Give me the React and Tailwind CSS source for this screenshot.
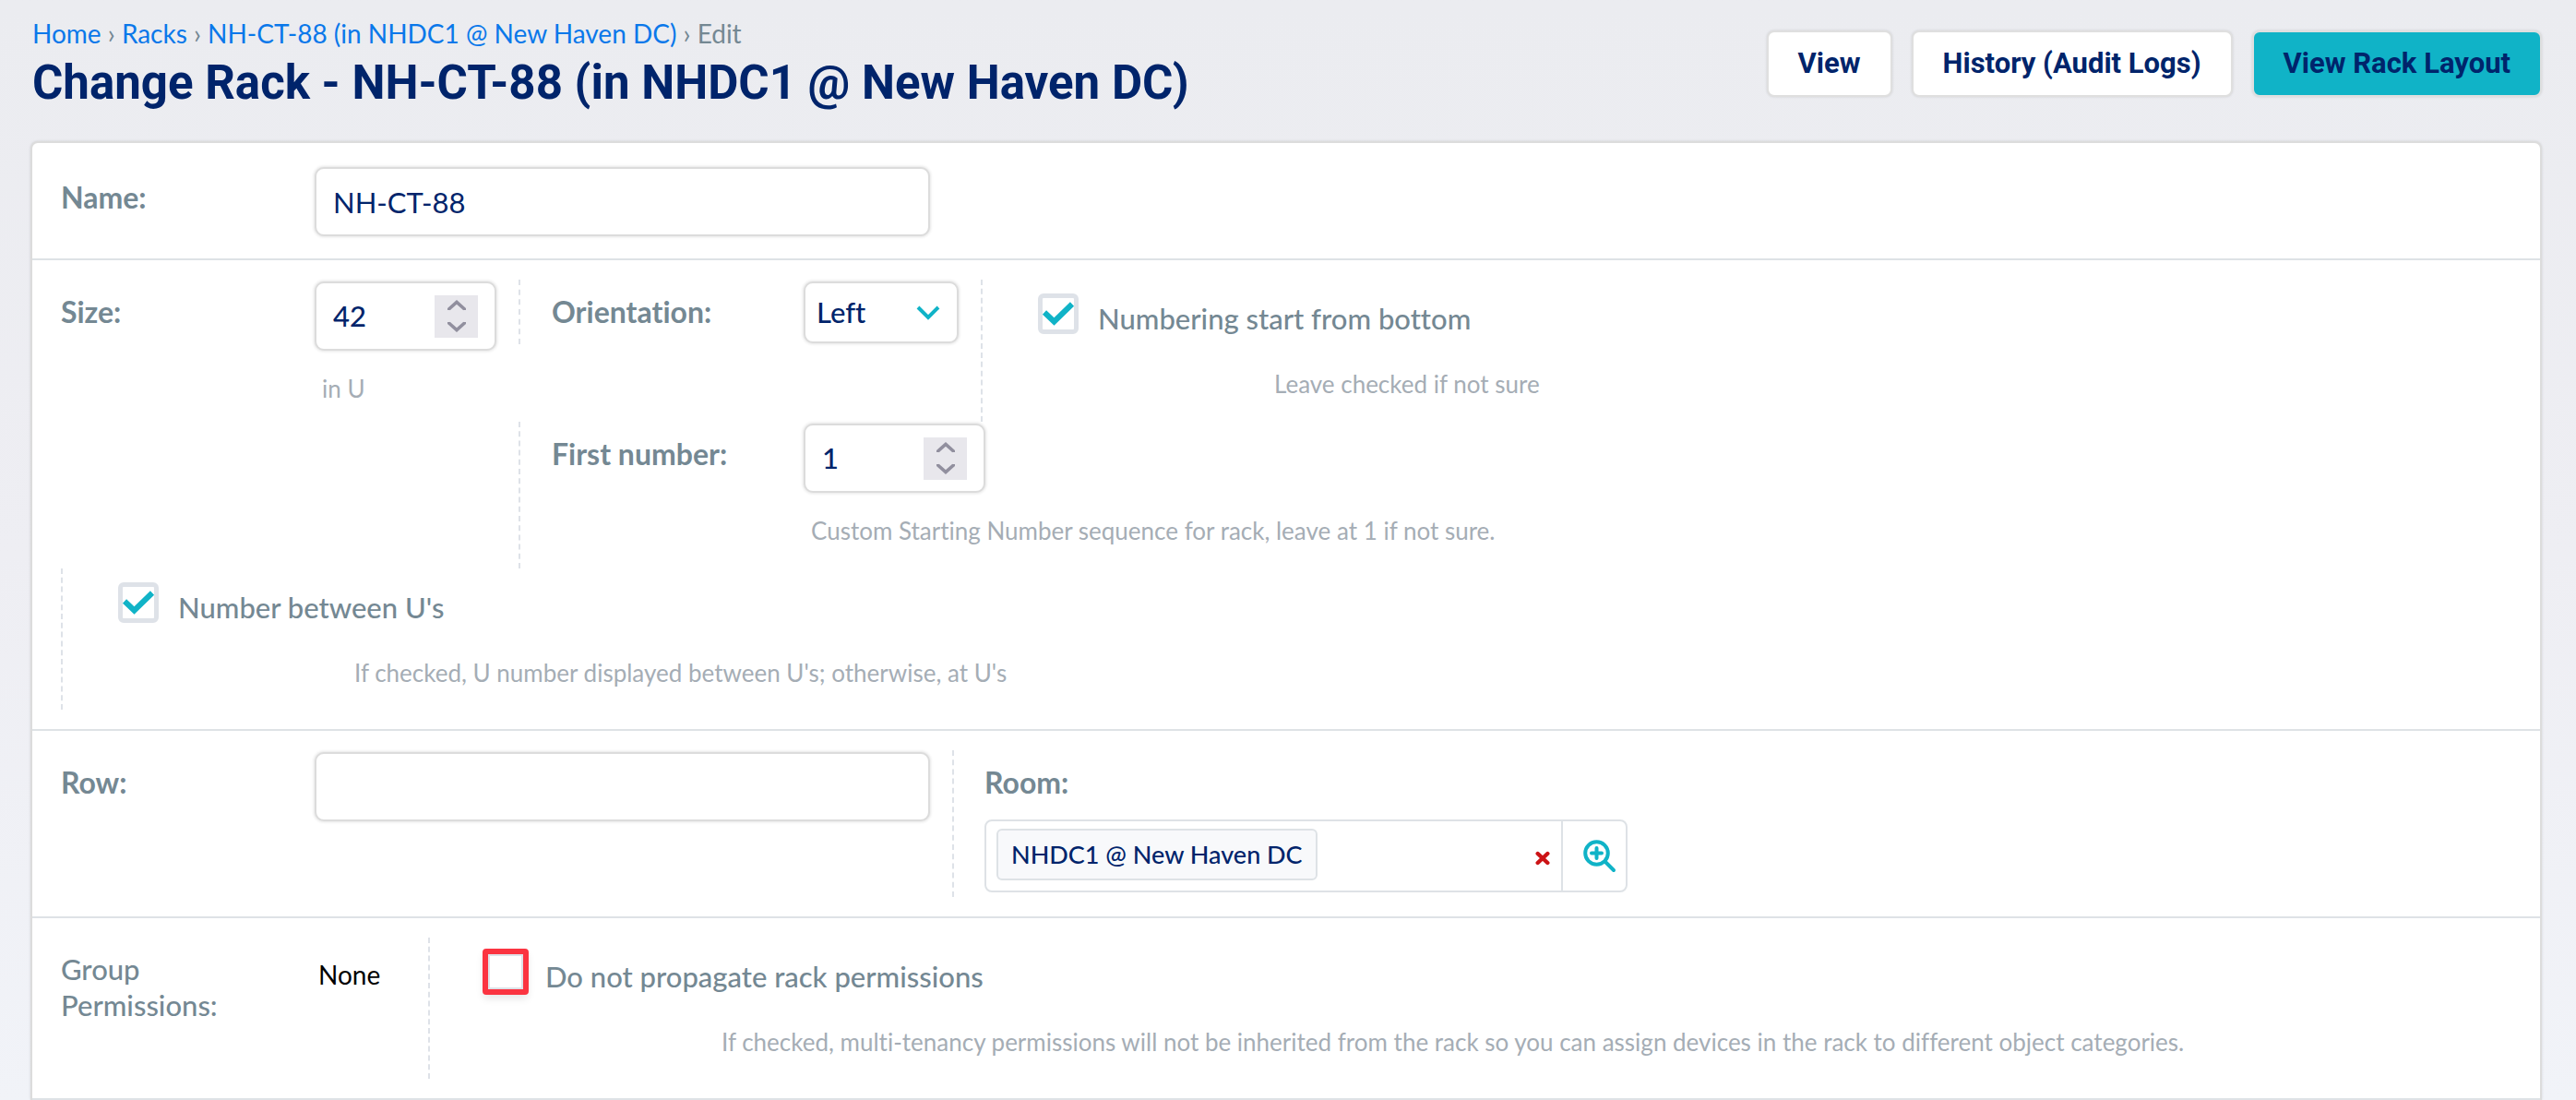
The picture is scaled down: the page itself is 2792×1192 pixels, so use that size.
import React from "react";

const fieldBox =
  "rounded-[10px] border-2 border-[#dcdcdc] bg-white shadow-[0_0_3px_1px_rgba(0,0,0,0.1)]";

function Label({ htmlFor, className = "", children }) {
  return (
    <label
      htmlFor={htmlFor}
      className={`mt-[15px] block shrink-0 text-[32px] leading-[39px] font-bold text-[#748893] ${className}`}
    >
      {children}
    </label>
  );
}

function Help({ className = "", children }) {
  return (
    <p className={`text-[26px] leading-[39px] whitespace-nowrap text-[#a5adb5] ${className}`}>
      {children}
    </p>
  );
}

function TextField({ id, defaultValue }) {
  return (
    <input
      id={id}
      type="text"
      defaultValue={defaultValue}
      className={`mt-[2px] h-[75px] w-[667px] px-[18px] text-[31px] text-[#00246b] outline-none ${fieldBox}`}
    />
  );
}

function StepButton({ label, d }) {
  return (
    <button type="button" aria-label={label} className="flex h-[23px] w-full items-center justify-center">
      <svg width="20" height="12" viewBox="0 0 20 12" fill="none" stroke="#918f9e" strokeWidth="3.6">
        <path d={d} />
      </svg>
    </button>
  );
}

function NumberField({ id, defaultValue }) {
  return (
    <div className={`mt-[2px] flex h-[75px] w-[197px] items-center pr-[18px] pl-[18px] ${fieldBox}`}>
      <input
        id={id}
        type="number"
        defaultValue={defaultValue}
        className="min-w-0 flex-1 appearance-none bg-transparent text-[31px] font-medium text-[#00246b] outline-none [-moz-appearance:textfield] [&::-webkit-inner-spin-button]:appearance-none"
      />
      <div className="w-[47px] bg-[#e8e7ec]">
        <StepButton label="Increase" d="M1.5 11V10L10 2.5L18.5 10V11" />
        <StepButton label="Decrease" d="M1.5 1V2L10 9.5L18.5 2V1" />
      </div>
    </div>
  );
}

function CheckField({ id, label, help, checked, highlighted, className = "" }) {
  return (
    <div className={`border-l-2 border-dashed border-[#dee2e8] pb-5 ${className}`}>
      <div className="flex pl-[60px]">
        <span className="mt-[15px] grid h-11 w-11 shrink-0">
          <input
            id={id}
            type="checkbox"
            defaultChecked={checked}
            className={`col-start-1 row-start-1 h-11 w-11 appearance-none border-[5px] border-[#dee2e8] bg-white peer ${
              highlighted
                ? "rounded-[1px] outline-[6px] outline-offset-[-3px] outline-[#fb3441] shadow-[0_5px_8px_2px_rgba(0,0,0,0.1)]"
                : "rounded-[6px]"
            }`}
          />
          <svg
            viewBox="0 0 44 44"
            className="pointer-events-none col-start-1 row-start-1 hidden h-11 w-11 peer-checked:block"
            fill="none"
            stroke="#10b3c7"
            strokeWidth="6"
          >
            <path d="M7 20.5L17.5 30.5L37 11.5" />
          </svg>
        </span>
        <label
          htmlFor={id}
          className="mt-[23px] ml-[21px] text-[31px] leading-[39px] font-medium whitespace-nowrap text-[#748893]"
        >
          {label}
        </label>
      </div>
      <Help className="mt-[32px] pl-[316px]">{help}</Help>
    </div>
  );
}

const dashed = "border-l-2 border-dashed border-[#dee2e8]";
const row = "border-b-2 border-[#dee2e6] px-[31px]";
const crumbLink = "text-[#0a78ea]";
const action =
  "flex h-[72px] items-center rounded-[8px] border-2 border-[#dfdfdf] px-8 font-['Roboto',sans-serif] text-[31px] font-bold whitespace-nowrap text-[#00246b] shadow-[0_0_3px_rgba(0,0,0,0.12)]";

export default function App() {
  return (
    <div className="flex min-h-screen flex-col bg-linear-to-b from-[#ebecf0] via-[#eeeef3] to-[#f1f3f8] font-['Lato','Open_Sans',sans-serif] [font-variant-ligatures:none]">
      <header className="flex items-start justify-between pr-[37px] pl-[35px]">
        <div>
          <nav aria-label="Breadcrumb" className="mt-[17px] text-[28px] leading-[39px] text-[#748893]">
            <a href="#home" className={crumbLink}>Home</a> ›{" "}
            <a href="#racks" className={crumbLink}>Racks</a> ›{" "}
            <a href="#rack" className={crumbLink}>NH-CT-88 (in NHDC1 @ New Haven DC)</a> › Edit
          </nav>
          <h1 className="font-['Roboto',sans-serif] text-[51px] leading-[68px] font-bold text-[#00246b]">
            Change Rack - NH-CT-88 (in NHDC1 @ New Haven DC)
          </h1>
        </div>
        <div className="mt-[33px] flex gap-[21px]">
          <a href="#view" className={`bg-white ${action}`}>View</a>
          <a href="#history" className={`bg-white ${action}`}>History (Audit Logs)</a>
          <a href="#layout" className={`bg-[#10b3c7] ${action}`}>View Rack Layout</a>
        </div>
      </header>

      <form className="mx-[33px] mt-[29px] mr-[37px] flex-1 rounded-t-[8px] border-2 border-b-0 border-[#dcdcdc] bg-white shadow-[0_0_3px_rgba(0,0,0,0.12)]">
        <section className={`flex py-6 ${row}`}>
          <Label htmlFor="name" className="w-[275px]">Name:</Label>
          <TextField id="name" defaultValue="NH-CT-88" />
        </section>

        <section className={`py-[21px] ${row}`}>
          <div className="flex min-h-[154px] items-start">
            <Label htmlFor="size" className="w-[275px]">Size:</Label>
            <div>
              <NumberField id="size" defaultValue="42" />
              <Help className="mt-[22px] pl-2">in U</Help>
            </div>
            <div className={`ml-6 flex h-[70px] pl-[34px] ${dashed}`}>
              <Label htmlFor="orientation" className="w-[273px]">Orientation:</Label>
              <div className="mt-[2px] grid h-[67px] w-[168px]">
                <select
                  id="orientation"
                  defaultValue="Left"
                  className={`col-start-1 row-start-1 h-[67px] w-full appearance-none pl-3 text-[31px] font-medium text-[#00246b] outline-none ${fieldBox}`}
                >
                  <option>Left</option>
                  <option>Right</option>
                </select>
                <svg
                  viewBox="0 0 26 16"
                  className="pointer-events-none col-start-1 row-start-1 mr-5 h-4 w-[26px] self-center justify-self-end"
                  fill="none"
                  stroke="#10b3c7"
                  strokeWidth="4"
                >
                  <path d="M2 2L13 13L24 2" />
                </svg>
              </div>
            </div>
            <CheckField
              id="from-bottom"
              label="Numbering start from bottom"
              help="Leave checked if not sure"
              checked
              className="ml-6 min-h-[154px]"
            />
          </div>

          <div className={`ml-[496px] flex pb-[21px] pl-[34px] ${dashed}`}>
            <Label htmlFor="first-number" className="w-[273px]">First number:</Label>
            <div>
              <NumberField id="first-number" defaultValue="1" />
              <Help className="mt-[22px] pl-2">
                Custom Starting Number sequence for rack, leave at 1 if not sure.
              </Help>
            </div>
          </div>

          <CheckField
            id="between"
            label="Number between U's"
            help="If checked, U number displayed between U's; otherwise, at U's"
            checked
          />
        </section>

        <section className={`flex py-[21px] ${row}`}>
          <Label htmlFor="row" className="w-[275px]">Row:</Label>
          <TextField id="row" defaultValue="" />
          <div className={`ml-6 pb-[5px] pl-[33px] ${dashed}`}>
            <Label htmlFor="room">Room:</Label>
            <div className="mt-[21px] flex h-[79px] w-[697px] rounded-[8px] border-2 border-[#dee2e6] bg-white">
              <div className="flex flex-1 items-start pt-2 pl-[11px]">
                <button
                  id="room"
                  type="button"
                  className="flex h-14 items-center rounded-[6px] border-2 border-[#dee2e6] bg-[#f8f9fb] px-[14px] text-[27px] font-medium whitespace-nowrap text-[#00246b]"
                >
                  NHDC1 @ New Haven DC
                </button>
              </div>
              <button type="button" aria-label="Clear room" className="mt-1 mr-3 self-center">
                <svg width="16" height="16" viewBox="0 0 16 16" stroke="#cc1316" strokeWidth="4.4" strokeLinecap="round">
                  <path d="M2.7 3L13.3 13M13.3 3L2.7 13" />
                </svg>
              </button>
              <button
                type="button"
                aria-label="Look up room"
                className="flex w-[70px] items-center justify-center border-l-2 border-[#dee2e6] pl-3"
              >
                <svg width="36" height="36" viewBox="0 0 36 36" fill="none" stroke="#10b3c7" strokeWidth="4" strokeLinecap="round">
                  <circle cx="14.5" cy="14.5" r="12.3" />
                  <path d="M24 24L33 33M14.5 9V20M9 14.5H20" />
                </svg>
              </button>
            </div>
          </div>
        </section>

        <section className={`flex py-[21px] ${row}`}>
          <div className="mt-[15px] w-[279px] pr-20 text-[31px] leading-[39px] font-medium text-[#748893]">
            Group Permissions:
          </div>
          <div className="mt-[21px] w-[119px] text-[28px] leading-[39px] text-black">None</div>
          <CheckField
            id="propagate"
            label="Do not propagate rack permissions"
            help="If checked, multi-tenancy permissions will not be inherited from the rack so you can assign devices in the rack to different object categories."
            highlighted
          />
        </section>
      </form>
    </div>
  );
}
